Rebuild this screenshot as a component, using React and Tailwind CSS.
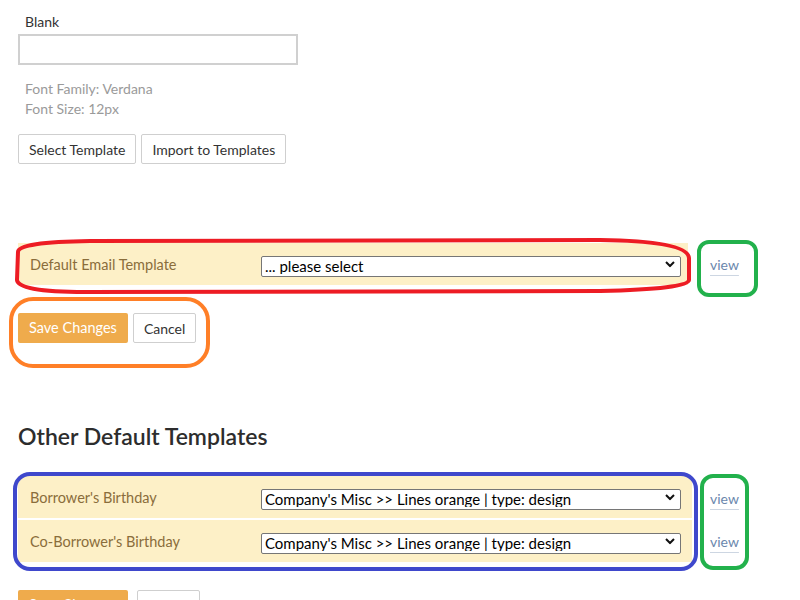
import React from 'react';

const font = { fontFamily: 'Lato, "Open Sans", sans-serif' };

const Chevron = () => (
  <svg
    className="pointer-events-none absolute right-[6px] top-1/2 -translate-y-1/2"
    width="10"
    height="7"
    viewBox="0 0 10 7"
  >
    <path d="M1 1.5 L5 5.5 L9 1.5" fill="none" stroke="#111" strokeWidth="2" />
  </svg>
);

const TemplateSelect = ({ value }) => (
  <div className="relative w-[420px] h-[21px]">
    <select
      defaultValue={value}
      className="appearance-none w-full h-full bg-white border border-[#767676] rounded-[2px] pl-[3px] text-[15px] leading-none text-black"
      style={font}
    >
      <option>{value}</option>
    </select>
    <Chevron />
  </div>
);

const ViewLink = () => (
  <a
    href="#"
    className="text-[14px] text-[#6b87ad] underline decoration-[#cdd6e2] underline-offset-[5px]"
  >
    view
  </a>
);

const Row = ({ label, value }) => (
  <div className="flex items-center h-[42px] bg-[#fdf0c7] pl-3">
    <span className="w-[231px] pt-[2px] text-[14.5px] text-[#8a6d3b]">{label}</span>
    <TemplateSelect value={value} />
  </div>
);

const Buttons = ({ gap }) => (
  <div className={`flex ${gap}`}>
    <button className="h-[30px] px-[11px] rounded-[2px] bg-[#efab4c] text-white text-[14.5px]">
      Save Changes
    </button>
    <button className="h-[30px] px-[10px] rounded-[2px] bg-white border border-[#cfcfcf] text-[#333] text-[14px]">
      Cancel
    </button>
  </div>
);

export default function App() {
  return (
    <div className="relative w-[800px] h-[600px] overflow-hidden bg-white" style={font}>
      <div className="pl-[18px] pt-[14px]">
        <div className="pl-[7px] text-[14px] text-[#333] leading-[16px]">Blank</div>
        <div className="mt-[4px] w-[280px] h-[31px] border-2 border-[#d0d0d0] bg-white" />

        <div className="mt-[14px] pl-[7px] text-[14px] leading-[20px] text-[#9a9a9a]">
          <div>Font Family: Verdana</div>
          <div>Font Size: 12px</div>
        </div>

        <div className="mt-[15px] flex gap-[5px]">
          <button className="h-[30px] px-[10px] rounded-[2px] bg-white border border-[#cfcfcf] text-[#333] text-[14px]">
            Select Template
          </button>
          <button className="h-[30px] px-[10px] rounded-[2px] bg-white border border-[#cfcfcf] text-[#333] text-[14px]">
            Import to Templates
          </button>
        </div>

        <div className="mt-[79px] flex items-center">
          <div className="w-[670px]">
            <Row label="Default Email Template" value="... please select" />
          </div>
          <div className="ml-[22px]">
            <ViewLink />
          </div>
        </div>

        <div className="mt-[28px]">
          <Buttons gap="gap-[5px]" />
        </div>

        <h2 className="mt-[79px] text-[23px] font-semibold text-[#2d2d2d] leading-[28px]">
          Other Default Templates
        </h2>

        <div className="mt-[26px] flex items-center">
          <div className="w-[674px] flex flex-col gap-[2px] pb-[1px]">
            <Row label="Borrower's Birthday" value="Company's Misc >> Lines orange | type: design" />
            <Row label="Co-Borrower's Birthday" value="Company's Misc >> Lines orange | type: design" />
          </div>
          <div className="ml-[18px] flex flex-col gap-[22px]">
            <ViewLink />
            <ViewLink />
          </div>
        </div>

        <div className="mt-[27px]">
          <Buttons gap="gap-[9px]" />
        </div>
      </div>

      {/* hand-drawn annotations */}
      <svg className="pointer-events-none absolute inset-0" width="800" height="600">
        <path
          d="M18 252 Q18 242 90 241 L600 240 Q688 241 689 258 L689 280 Q688 289 600 291 L85 292 Q18 292 17 280 Z"
          fill="none"
          stroke="#ed1c24"
          strokeWidth="4"
        />
        <rect x="699" y="242" width="57" height="53" rx="10" fill="none" stroke="#22b14c" strokeWidth="4" />
        <rect x="11" y="299" width="197" height="67" rx="22" fill="none" stroke="#ff7f27" strokeWidth="4" />
        <rect x="15" y="474" width="681" height="95" rx="15" fill="none" stroke="#3f48cc" strokeWidth="4" />
        <rect x="702" y="476" width="45" height="92" rx="11" fill="none" stroke="#22b14c" strokeWidth="4" />
      </svg>
    </div>
  );
}
